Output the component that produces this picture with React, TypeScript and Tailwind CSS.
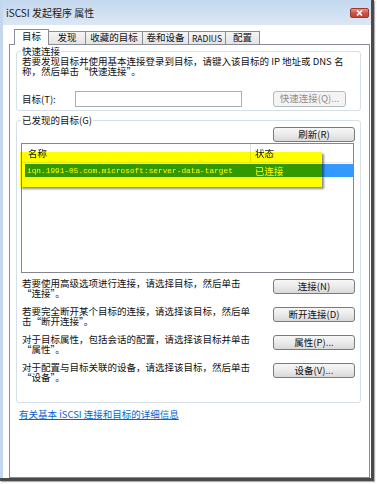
import React from "react";

const FONT = { fontFamily: '"Noto Sans CJK SC", "Noto Sans", sans-serif' };

function Btn({
  children,
  className = "",
  disabled = false,
}: {
  children: React.ReactNode;
  className?: string;
  disabled?: boolean;
}) {
  return (
    <div
      className={
        "flex items-center justify-center rounded-[3px] border text-[9.5px] leading-none whitespace-nowrap " +
        (disabled
          ? "border-[#b5b9bc] bg-[#f4f4f4] text-[#8c8c8c] "
          : "border-[#7a7a7a] bg-linear-to-b from-[#f7f7f7] via-[#ebebeb] to-[#d9d9d9] text-[#111] ") +
        className
      }
    >
      {children}
    </div>
  );
}

export default function App() {
  const rows: { lines: [string, string]; btn: string }[] = [
    { lines: ["若要使用高级选项进行连接，请选择目标，然后单击", "“连接”。"], btn: "连接(N)" },
    { lines: ["若要完全断开某个目标的连接，请选择该目标，然后单", "击“断开连接”。"], btn: "断开连接(D)" },
    { lines: ["对于目标属性，包括会话的配置，请选择该目标并单击", "“属性”。"], btn: "属性(P)..." },
    { lines: ["对于配置与目标关联的设备，请选择该目标，然后单击", "“设备”。"], btn: "设备(V)..." },
  ];

  return (
    <div lang="zh-CN" className="w-[377px] h-[484px] bg-white overflow-hidden text-[#111]" style={FONT}>
      <div className="w-[374px] h-[481px] border-r-[3px] border-b-[3px] border-[#4a4a4a] shadow-[1px_1px_1px_#b0b0b0] flex">
        {/* left frame strip */}
        <div className="w-[3px] bg-[#c3d7ef]" />
        <div className="flex-1 flex flex-col">
          {/* title bar */}
          <div className="h-[25px] flex items-center pl-[3px] pr-[1px] bg-linear-to-b from-[#c4d8ef] to-[#dbe7f5]">
            <span className="text-[10px] leading-none text-[#1a1a1a]">iSCSI 发起程序 属性</span>
            <div className="ml-auto mr-[1px] w-[19px] h-[10px] rounded-[2px] border border-[#9a3a30] bg-linear-to-b from-[#e3978c] via-[#cc5446] to-[#c04436] flex items-center justify-center">
              <svg width="7" height="6" viewBox="0 0 7 6">
                <path d="M1 0.5 L6 5.5 M6 0.5 L1 5.5" stroke="white" strokeWidth="1.6" />
              </svg>
            </div>
          </div>
          {/* body */}
          <div className="flex-1 flex flex-col pt-[4px] pl-[6px] pr-[1px] bg-white">
            {/* tabs */}
            <div className="h-[15px] flex items-end pl-[5px] text-[9.5px] leading-none">
              <div className="w-[35px] h-[16px] -mb-px relative z-10 bg-white border-l border-t border-r border-[#898c95] flex items-center justify-center pb-[1px]">
                目标
              </div>
              <div className="w-[37px] h-[13px] border-t border-r border-[#898c95] bg-linear-to-b from-[#f5f5f5] to-[#e4e4e4] flex items-center justify-center">
                发现
              </div>
              <div className="w-[57px] h-[13px] border-t border-r border-[#898c95] bg-linear-to-b from-[#f5f5f5] to-[#e4e4e4] flex items-center justify-center">
                收藏的目标
              </div>
              <div className="w-[46px] h-[13px] border-t border-r border-[#898c95] bg-linear-to-b from-[#f5f5f5] to-[#e4e4e4] flex items-center justify-center">
                卷和设备
              </div>
              <div className="w-[37px] h-[13px] border-t border-r border-[#898c95] bg-linear-to-b from-[#f5f5f5] to-[#e4e4e4] flex items-center justify-center text-[8.5px]">
                RADIUS
              </div>
              <div className="w-[34px] h-[13px] border-t border-r border-[#898c95] bg-linear-to-b from-[#f5f5f5] to-[#e4e4e4] flex items-center justify-center">
                配置
              </div>
            </div>
            {/* tab panel */}
            <div className="flex-1 border border-[#898c95] bg-white pt-[1px] pl-[6px] pr-[8px] flex flex-col text-[9.5px] leading-[10px]">
              {/* quick connect group */}
              <fieldset className="border border-[#d5dfe5] rounded-[3px] pl-[5px] pb-[3px]">
                <legend className="px-[1px] -ml-[1px] leading-[10px]">快速连接</legend>
                <div className="whitespace-nowrap">若要发现目标并使用基本连接登录到目标，请键入该目标的 IP 地址或 DNS 名</div>
                <div className="whitespace-nowrap">称，然后单击“快速连接”。</div>
                <div className="mt-[15px] flex items-center h-[16px]">
                  <div className="w-[53px] whitespace-nowrap">目标(T):</div>
                  <div className="w-[167px] h-[16px] border border-[#abadb3] bg-white" />
                  <Btn disabled className="ml-[31px] w-[73px] h-[16px]">
                    快速连接(Q)...
                  </Btn>
                </div>
              </fieldset>

              {/* discovered targets group */}
              <fieldset className="mt-[4px] border border-[#d5dfe5] rounded-[3px] pl-[4px] pr-[5px] pb-[20px]">
                <legend className="px-[1px] ml-0 leading-[10px]">已发现的目标(G)</legend>
                <div className="mt-[2px] flex justify-end">
                  <Btn className="w-[82px] h-[15px]">刷新(R)</Btn>
                </div>
                {/* list view */}
                <div className="mt-[1px] mr-[1px] h-[130px] border border-[#828790] bg-white relative isolate">
                  <div className="h-[19px] flex border-b border-[#e8e8e8] items-center">
                    <div className="w-[229px] h-full flex items-center pl-[6px] border-r border-[#e2e2e2]">名称</div>
                    <div className="pl-[4px]">状态</div>
                  </div>
                  <div className="mt-[1px] ml-[3px] h-[13px] bg-[#3399ff] text-white flex items-center">
                    <div
                      className="w-[226px] pl-[2px] text-[7.8px] whitespace-nowrap"
                      style={{ fontFamily: '"Liberation Mono", monospace' }}
                    >
                      iqn.1991-05.com.microsoft:server-data-target
                    </div>
                    <div className="pl-[4px]">已连接</div>
                  </div>
                  {/* yellow annotation highlight */}
                  <div className="absolute left-[-2px] top-[8px] w-[302px] h-[35px] bg-[#ffff00] mix-blend-multiply shadow-[2px_2px_2px_rgba(0,0,0,0.45)]" />
                </div>

                <div className="mt-[5px] flex flex-col gap-[8px]">
                  {rows.map((r) => (
                    <div key={r.btn} className="h-[20px] flex items-start">
                      <div className="ml-[1px] flex-1 leading-[10px]">
                        <div className="h-[10px] whitespace-nowrap">{r.lines[0]}</div>
                        <div className="h-[10px] whitespace-nowrap">{r.lines[1]}</div>
                      </div>
                      <Btn className="mt-[1px] w-[82px] h-[15px]">{r.btn}</Btn>
                    </div>
                  ))}
                </div>
              </fieldset>

              <div className="mt-[6px] ml-[3px]">
                <span className="text-[#0066cc] underline whitespace-nowrap">有关基本 iSCSI 连接和目标的详细信息</span>
              </div>
            </div>
          </div>
        </div>
      </div>
    </div>
  );
}
